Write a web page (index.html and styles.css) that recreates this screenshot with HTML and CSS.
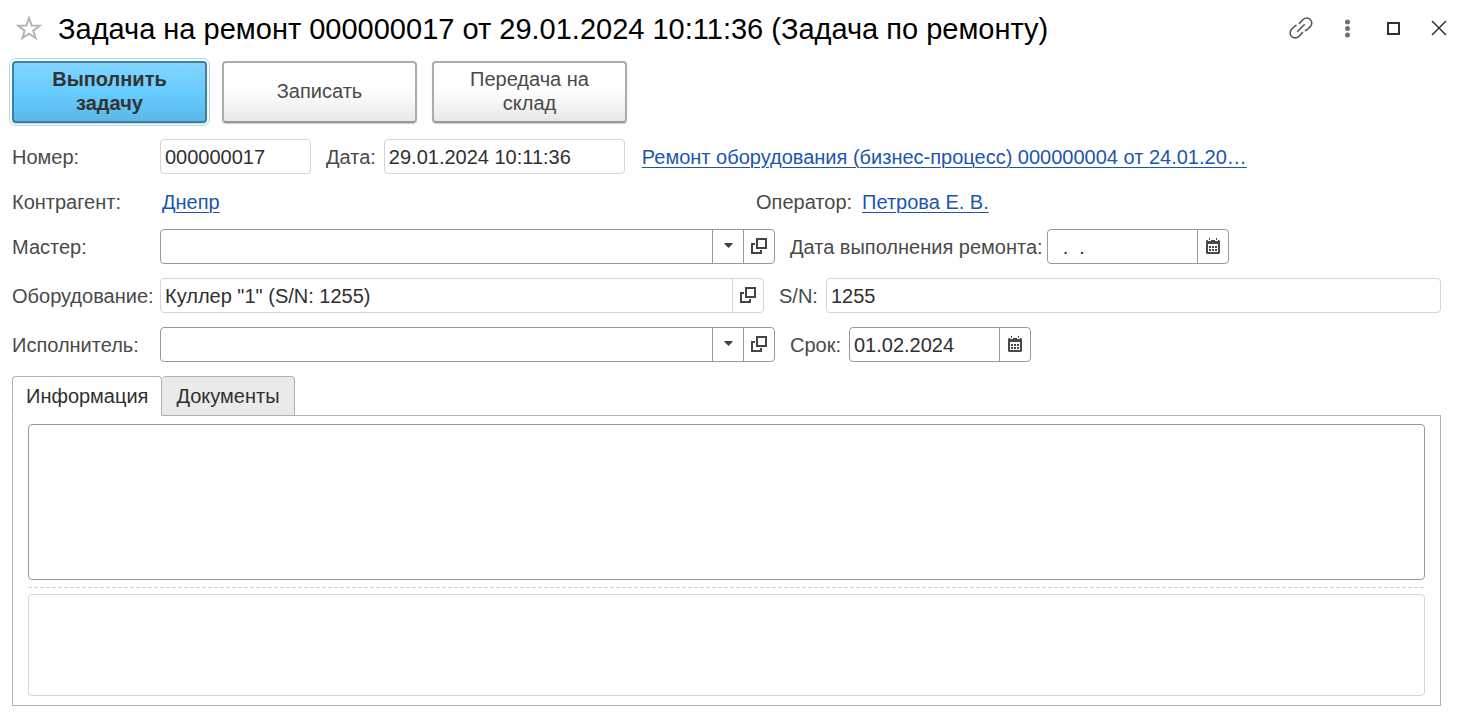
FILE: index.html
```html
<!DOCTYPE html>
<html lang="ru">
<head>
<meta charset="utf-8">
<meta name="viewport" content="width=device-width, initial-scale=1">
<title>Задача на ремонт</title>
<link rel="stylesheet" href="styles.css">
</head>
<body>
<svg class="sprite" aria-hidden="true">
  <symbol id="open" viewBox="0 0 16 16"><path d="M6 1h9v9H6z M4 6H1v9h9v-3" fill="none" stroke="#444" stroke-width="2"/></symbol>
  <symbol id="arrow" viewBox="0 0 8 5"><path d="M0 0h8v1L4 5 0 1z" fill="#444"/></symbol>
  <symbol id="calendar" viewBox="0 0 14 16"><path fill="#484848" fill-rule="evenodd" d="M1 2h1v1h3V2h4v1h3V2h1l1 1v12l-1 1H1l-1-1V3zM2 6v8h10V6z"/><path fill="#484848" d="M3 0h1v2H3zM10 0h1v2h-1zM3 8h2v2H3zM6 8h2v2H6zM9 8h2v2H9zM3 11h2v2H3zM6 11h2v2H6zM9 11h2v2H9z"/></symbol>
</svg>

<header class="titlebar">
  <button class="icon-button" type="button" aria-label="Добавить в избранное">
    <svg width="26" height="26" viewBox="0 0 26 26"><path d="M13 3l2.6 7.6 8.2.1-6.5 4.9 2.3 7.6-6.6-4.5-6.6 4.5 2.3-7.6-6.5-4.9 8.2-.1z" fill="none" stroke="#b3b3b9" stroke-width="2"/></svg>
  </button>
  <h1 class="title">Задача на ремонт 000000017 от 29.01.2024 10:11:36 (Задача по ремонту)</h1>
  <div class="window-tools">
    <button class="icon-button" type="button" aria-label="Получить ссылку">
      <svg width="24" height="24" viewBox="0 0 24 24" fill="none" stroke="#555" stroke-width="1.6"><path d="M10.2 8.1c.4-1.2 1.2-1.9 2.2-2.9l1.7-1.7a5 5 0 0 1 7.2 7.1l-2.7 2.7c-.9.9-1.6 1.3-2.8 1.3M7.6 9.4c-1 .1-1.600.5-2.400 1.300l-2.600 2.600a5 5 0 0 0 7.200 7.100l2.700-2.700c.7-.7 1-1.200 1.200-2M8.300 15.800l7.400-7.600"/></svg>
    </button>
    <button class="icon-button" type="button" aria-label="Ещё">
      <svg width="24" height="24" viewBox="0 0 24 24" fill="#707070"><circle cx="12.500" cy="6" r="2.500"/><circle cx="12.500" cy="12.500" r="2.500"/><circle cx="12.500" cy="19" r="2.500"/></svg>
    </button>
    <button class="icon-button" type="button" aria-label="Развернуть">
      <svg width="24" height="24" viewBox="0 0 24 24"><path d="M7 7h11v11H7z" fill="none" stroke="#303030" stroke-width="2"/></svg>
    </button>
    <button class="icon-button" type="button" aria-label="Закрыть">
      <svg width="24" height="24" viewBox="0 0 24 24"><path d="M5 5l14 14M19 5L5 19" stroke="#333" stroke-width="1.5"/></svg>
    </button>
  </div>
</header>

<main class="content">
  <div class="commands">
    <button class="command command-primary" type="button">Выполнить задачу</button>
    <button class="command" type="button">Записать</button>
    <button class="command" type="button">Передача на склад</button>
  </div>

  <form class="form">
    <div class="row">
      <label class="label label-first" for="number">Номер:</label>
      <div class="field field-readonly field-number"><input id="number" class="input" type="text" value="000000017" readonly></div>
      <label class="label" for="date">Дата:</label>
      <div class="field field-readonly field-datetime"><input id="date" class="input" type="text" value="29.01.2024 10:11:36" readonly></div>
      <a class="link" href="#process">Ремонт оборудования (бизнес-процесс) 000000004 от 24.01.20…</a>
    </div>
    <div class="row">
      <span class="label label-first">Контрагент:</span>
      <div class="link-cell"><a class="link" href="#partner">Днепр</a></div>
      <span class="label label-operator">Оператор:</span>
      <a class="link" href="#operator">Петрова Е. В.</a>
    </div>
    <div class="row">
      <label class="label label-first" for="master">Мастер:</label>
      <div class="field field-person">
        <input id="master" class="input" type="text">
        <button class="field-button" type="button" aria-label="Выбрать мастера"><svg width="9" height="5"><use href="#arrow"/></svg></button>
        <button class="field-button" type="button" aria-label="Открыть мастера"><svg width="16" height="16"><use href="#open"/></svg></button>
      </div>
      <label class="label label-tight" for="done">Дата выполнения ремонта:</label>
      <div class="field field-date">
        <input id="done" class="input" type="text" value="  .  .">
        <button class="field-button" type="button" aria-label="Календарь"><svg width="14" height="16"><use href="#calendar"/></svg></button>
      </div>
    </div>
    <div class="row row-spaced">
      <label class="label label-first" for="equipment">Оборудование:</label>
      <div class="field field-readonly field-equipment">
        <input id="equipment" class="input" type="text" value='Куллер "1" (S/N: 1255)' readonly>
        <button class="field-button" type="button" aria-label="Открыть оборудование"><svg width="16" height="16"><use href="#open"/></svg></button>
      </div>
      <label class="label" for="serial">S/N:</label>
      <div class="field field-readonly field-serial"><input id="serial" class="input" type="text" value="1255" readonly></div>
    </div>
    <div class="row row-spaced">
      <label class="label label-first" for="executor">Исполнитель:</label>
      <div class="field field-person">
        <input id="executor" class="input" type="text">
        <button class="field-button" type="button" aria-label="Выбрать исполнителя"><svg width="9" height="5"><use href="#arrow"/></svg></button>
        <button class="field-button" type="button" aria-label="Открыть исполнителя"><svg width="16" height="16"><use href="#open"/></svg></button>
      </div>
      <label class="label" for="due">Срок:</label>
      <div class="field field-date">
        <input id="due" class="input" type="text" value="01.02.2024">
        <button class="field-button" type="button" aria-label="Календарь"><svg width="14" height="16"><use href="#calendar"/></svg></button>
      </div>
    </div>
  </form>

  <div class="tabs" role="tablist">
    <button class="tab tab-active" type="button" role="tab" aria-selected="true">Информация</button>
    <button class="tab" type="button" role="tab" aria-selected="false">Документы</button>
    <span class="tabs-line"></span>
  </div>
  <section class="panel" role="tabpanel">
    <textarea class="memo" aria-label="Информация"></textarea>
    <div class="splitter"></div>
    <textarea class="memo memo-readonly" aria-label="Результат" readonly></textarea>
  </section>
</main>
</body>
</html>
```

FILE: styles.css
```css
* {
  box-sizing: border-box;
}

body {
  margin: 0;
  background: #fff;
  color: #4a4a4a;
  font: 20px/24px "Liberation Sans", Arial, sans-serif;
}

button,
input,
textarea {
  margin: 0;
  font: inherit;
  color: inherit;
}

.sprite {
  display: none;
}

.titlebar {
  display: flex;
  align-items: center;
  gap: 16px;
  height: 56px;
  padding: 0 11px 0 16px;
}

.icon-button {
  display: flex;
  padding: 0;
  border: 0;
  background: none;
}

.title {
  flex: 1;
  min-width: 0;
  margin: 0;
  padding-top: 2px;
  color: #000;
  font-size: 29px;
  font-weight: 400;
  line-height: 36px;
}

.window-tools {
  display: flex;
  gap: 22px;
}

.content {
  padding: 5px 21px 12px 12px;
}

.commands {
  display: flex;
  gap: 15px;
  margin-bottom: 16px;
}

.command {
  width: 195px;
  height: 62px;
  padding: 0 24px 2px;
  border: 2px solid #acacac;
  border-bottom-color: #999;
  border-radius: 4px;
  background: linear-gradient(#fff 45%, #e8e8e8);
  box-shadow: 0 1px 1px #ccc;
}

.command-primary {
  border-color: #3f7f9f;
  background: linear-gradient(#83d5ff, #66ccff 50%, #5cb8e8);
  color: #333;
  font-weight: 700;
  outline: 1px solid #a3dbef;
  outline-offset: 2px;
}

.form {
  display: flex;
  flex-direction: column;
  gap: 10px;
}

.row {
  display: flex;
  align-items: center;
  min-height: 35px;
}

.row-spaced {
  margin-top: 4px;
}

.label {
  margin: 0 8px 0 15px;
  white-space: nowrap;
}

.label-first {
  flex: 0 0 148px;
  margin: 0;
}

.label-tight {
  margin-right: 4px;
}

.label-operator {
  margin-left: 0;
  margin-right: 10px;
}

.link {
  color: #1c55ae;
  text-decoration: underline;
  text-decoration-thickness: 1px;
  text-underline-offset: 3px;
}

.field + .link {
  margin-left: 17px;
}

.link-cell {
  flex: 0 1 596px;
  padding-left: 2px;
}

.field {
  display: flex;
  height: 35px;
  overflow: hidden;
  border: 1px solid #999;
  border-radius: 4px;
  color: #303030;
}

.field-readonly {
  border-color: #d5d5d5;
}

.field-number {
  flex: 0 1 151px;
}

.field-datetime {
  flex: 0 1 241px;
}

.field-person {
  flex: 0 1 615px;
}

.field-equipment {
  flex: 0 1 604px;
}

.field-date {
  flex: 0 1 182px;
}

.field-serial {
  flex: 1;
}

.input {
  flex: 1;
  min-width: 0;
  padding: 0 4px;
  border: 0;
  background: none;
  outline: 0;
}

.field-button {
  display: flex;
  align-items: center;
  justify-content: center;
  width: 31px;
  padding: 0 0 2px;
  border: 0;
  border-left: 1px solid #999;
  background: none;
}

.field-readonly .field-button {
  border-color: #d5d5d5;
}

.tabs {
  display: flex;
  margin-top: 14px;
}

.tab {
  height: 40px;
  padding: 0 14px;
  border: 1px solid #b0b0b0;
  border-left-width: 0;
  border-radius: 4px 4px 0 0;
  background: #eaeaea;
  color: #303030;
}

.tab-active {
  padding: 0 13px;
  border-left-width: 1px;
  border-bottom-color: #fff;
  background: #fff;
}

.tabs-line {
  flex: 1;
  border-bottom: 1px solid #b0b0b0;
}

.panel {
  display: flex;
  flex-direction: column;
  padding: 8px 15px 9px;
  border: 1px solid #b0b0b0;
  border-top: 0;
}

.memo {
  display: block;
  width: 100%;
  height: 156px;
  padding: 4px;
  border: 1px solid #999;
  border-radius: 4px;
  background: #fff;
  outline: 0;
  resize: none;
}

.splitter {
  height: 1px;
  margin: 7px 0 6px;
  background: repeating-linear-gradient(90deg, #d5d5d5 0 4px, transparent 4px 6px);
}

.memo-readonly {
  height: 102px;
  border-color: #d5d5d5;
}
```
